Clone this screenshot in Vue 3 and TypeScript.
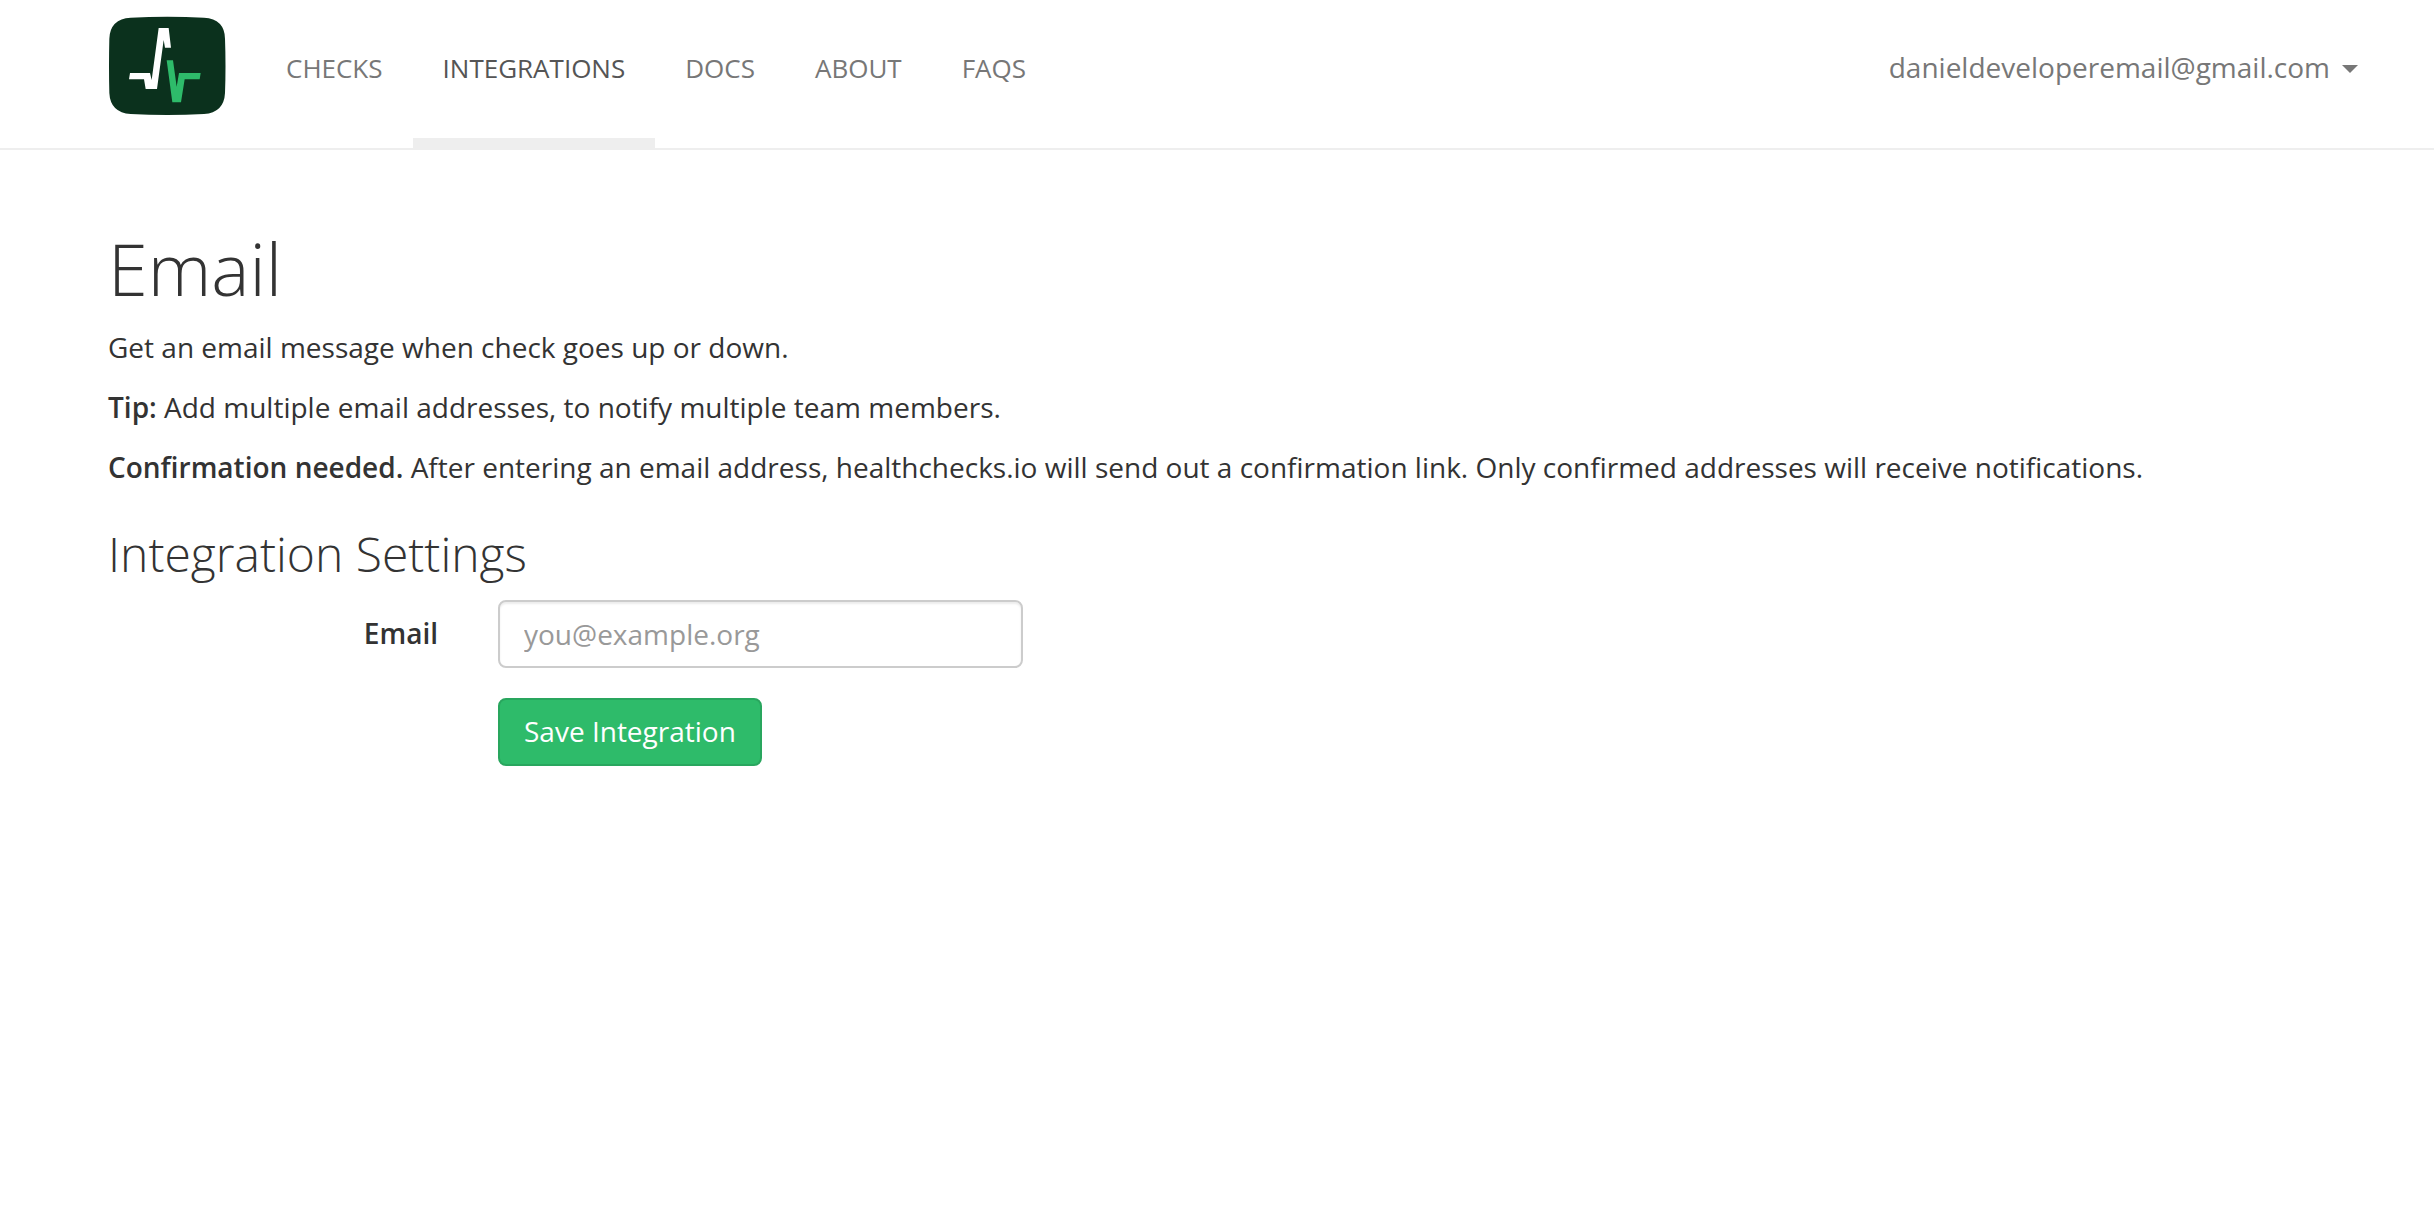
<script setup lang="ts">
import { ref } from 'vue'

interface NavItem {
  label: string
  href: string
  active?: boolean
}

const navItems: NavItem[] = [
  { label: 'Checks', href: '#checks' },
  { label: 'Integrations', href: '#integrations', active: true },
  { label: 'Docs', href: '#docs' },
  { label: 'About', href: '#about' },
  { label: 'FAQs', href: '#faqs' },
]

const account = 'danieldeveloperemail@gmail.com'
const email = ref('')
</script>

<template>
  <header class="navbar">
    <div class="container navbar-row">
      <a class="brand" href="#home" aria-label="Home">
        <svg class="logo" viewBox="24 18 354 300" aria-hidden="true">
          <path
            class="logo-tile"
            d="M92 23Q202 17 312 23Q374 27 375 86Q378 168 375 249Q372 308 312 312Q202 318 92 312Q31 308 28 249Q26 168 28 86Q30 27 92 23Z"
          />
          <path class="logo-up" d="M90 189H150L155 210L176 54H206L213 113H195L191 90L171 237H137L132 208H87Z" />
          <path class="logo-down" d="M200 151H219L230 230L237 189H302L299 208H254L243 277H217Z" />
        </svg>
      </a>
      <nav class="nav">
        <a
          v-for="item in navItems"
          :key="item.href"
          :href="item.href"
          class="nav-link"
          :class="{ active: item.active }"
        >{{ item.label }}</a>
      </nav>
      <button type="button" class="account" aria-haspopup="true">
        {{ account }}<span class="caret"></span>
      </button>
    </div>
  </header>

  <main class="container">
    <section class="intro">
      <h1>Email</h1>
      <p>Get an email message when check goes up or down.</p>
      <p><strong>Tip:</strong> Add multiple email addresses, to notify multiple team members.</p>
      <p>
        <strong>Confirmation needed.</strong> After entering an email address, healthchecks.io will
        send out a confirmation link. Only confirmed addresses will receive notifications.
      </p>
      <h2>Integration Settings</h2>
    </section>

    <form class="settings" @submit.prevent>
      <label class="field-label" for="email">Email</label>
      <div class="field">
        <input id="email" v-model="email" class="text-input" type="email" placeholder="you@example.org" />
      </div>
      <div class="actions">
        <button type="submit" class="save">Save Integration</button>
      </div>
    </form>
  </main>
</template>

<style>
body {
  margin: 0;
  background: #fff;
}
</style>

<style scoped>
.navbar,
.container {
  font-family: 'Open Sans', sans-serif;
  font-size: 28px;
  line-height: 40px;
  color: #333;
}

.container {
  box-sizing: border-box;
  margin: 0 16px 0 78px;
}

.navbar {
  border-bottom: 2px solid #eee;
}

.navbar-row {
  display: flex;
  align-items: stretch;
  height: 148px;
  padding: 0 30px;
}

.brand {
  padding: 16px 30px 0 0;
}

.logo {
  display: block;
  width: 118px;
  height: 100px;
}

.logo-tile {
  fill: #0b311d;
}

.logo-up {
  fill: #fff;
}

.logo-down {
  fill: #2ebb6a;
}

.nav {
  display: flex;
  flex: 1;
}

.nav-link {
  box-sizing: border-box;
  height: 150px;
  padding: 48px 30px 0;
  border-bottom: 12px solid transparent;
  font-size: 26px;
  text-transform: uppercase;
  text-decoration: none;
  color: #777;
}

.nav-link.active {
  color: #555;
  border-bottom-color: #eee;
}

.account {
  display: flex;
  align-items: center;
  align-self: flex-start;
  gap: 12px;
  padding: 47px 30px 0;
  border: 0;
  background: none;
  font: inherit;
  color: #777;
}

.caret {
  margin-top: 4px;
  border: 8px solid transparent;
  border-top-color: currentColor;
  border-bottom: 0;
}

.intro {
  padding: 79px 30px 0;
}

h1,
h2 {
  font-weight: 300;
}

h1 {
  margin: 0 0 20px;
  font-size: 72px;
  line-height: 78px;
}

h2 {
  margin: 40px 0 19px;
  font-size: 48px;
  line-height: 54px;
}

p {
  margin: 0 0 20px;
}

strong {
  font-weight: 600;
}

.settings {
  display: grid;
  grid-template-columns: minmax(0, 2fr) minmax(0, 3fr) minmax(0, 7fr);
  row-gap: 30px;
}

.field-label {
  padding: 13px 30px 0;
  font-weight: 600;
  text-align: right;
}

.field {
  padding: 0 30px;
}

.text-input {
  box-sizing: border-box;
  display: block;
  width: 100%;
  height: 68px;
  padding: 12px 24px;
  border: 2px solid #ccc;
  border-radius: 8px;
  box-shadow: inset 0 2px 2px rgba(0, 0, 0, 0.075);
  font: inherit;
  color: #555;
}

.text-input::placeholder {
  color: #999;
  opacity: 1;
}

.actions {
  grid-column: 2;
  padding: 0 30px;
}

.save {
  display: block;
  padding: 11px 24px 13px;
  border: 2px solid #29a65e;
  border-radius: 8px;
  background: #2ebb6a;
  font: inherit;
  white-space: nowrap;
  color: #fff;
}
</style>
